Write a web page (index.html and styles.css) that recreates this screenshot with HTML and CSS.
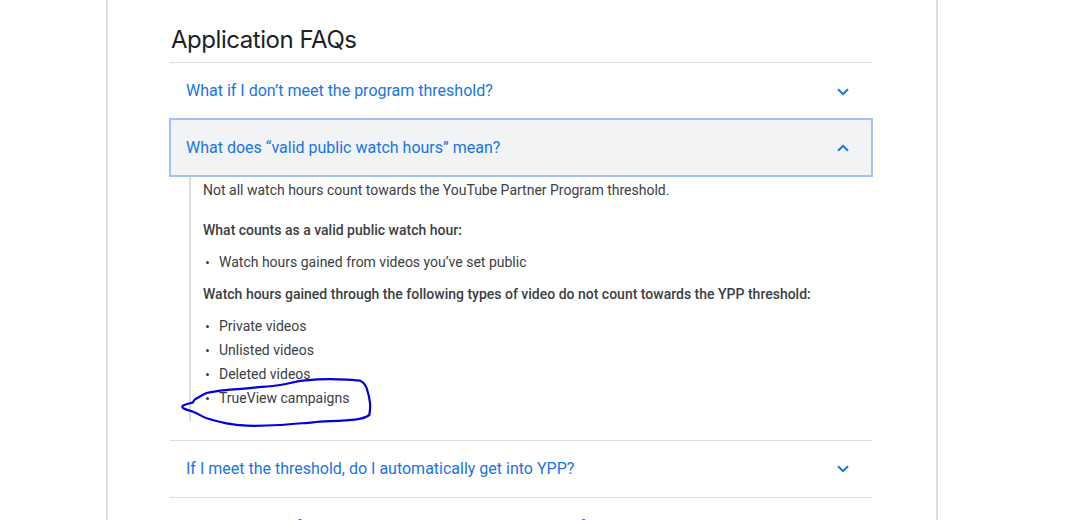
FILE: index.html
```html
<!DOCTYPE html>
<html lang="en">
<head>
<meta charset="utf-8">
<title>Application FAQs</title>
<link rel="stylesheet" href="styles.css">
</head>
<body>
<main class="card">
  <h2 class="title">Application FAQs</h2>
  <div class="faq">
    <div class="q first">
      <span>What if I don’t meet the program threshold?</span>
      <svg class="chev" viewBox="0 0 12 8" width="12" height="8"><path d="M1 2.2 6 7.2 11 2.2" /></svg>
    </div>
    <div class="q open">
      <span>What does “valid public watch hours” mean?</span>
      <svg class="chev" viewBox="0 0 12 8" width="12" height="8"><path d="M1 6.8 6 1.8 11 6.8" /></svg>
    </div>
    <div class="answer">
      <p class="lead">Not all watch hours count towards the YouTube Partner Program threshold.</p>
      <p class="strong">What counts as a valid public watch hour:</p>
      <ul class="list">
        <li>Watch hours gained from videos you’ve set public</li>
      </ul>
      <p class="strong second">Watch hours gained through the following types of video do not count towards the YPP threshold:</p>
      <ul class="list">
        <li>Private videos</li>
        <li>Unlisted videos</li>
        <li>Deleted videos</li>
        <li>TrueView campaigns</li>
      </ul>
      <svg class="scribble" viewBox="0 0 195 50" width="195" height="50"><path d="M12.7 24.7C13.5 23 14 22 15 21.3C19 19 23 16.5 26.7 15C31 13.8 35 13.4 40 12.7C52 11.5 65 10.8 76.7 9.3C85 8.6 92 8.2 100 7C108 5.8 115 3.6 123 2.7C134 1.6 146 1 156.7 1.3C165 1.5 174 1.6 180 2.7C183.5 4 185.5 7 186.7 10.3C188.3 15 189.5 20 190 25C190.4 29 190 33 189.3 37C186 39.5 181 40.8 176.7 41.3C162 42.8 147 43.2 133 44.3C122 45.2 111 46.4 100 47C89 47.6 78 48 66.7 47.7C60 47.4 53 46.6 46.7 45.3C39.5 43.8 33 42.5 26.7 40.3C22 38.5 18 35.6 13 33.7C9.5 32.5 6 31.8 3.3 30.3C2.4 29.6 2.2 28.6 2.7 27.7C5.5 26.4 8.7 25.6 11.7 24.7" /></svg>
    </div>
    <div class="q rule">
      <span>If I meet the threshold, do I automatically get into YPP?</span>
      <svg class="chev" viewBox="0 0 12 8" width="12" height="8"><path d="M1 1.2 6 6.2 11 1.2" /></svg>
    </div>
    <div class="q">
      <span>What happens if my channel drops below the threshold for a time?</span>
    </div>
  </div>
</main>
</body>
</html>
```
FILE: styles.css
```css
html, body {
  margin: 0;
  height: 520px;
  overflow: hidden;
  background: #fff;
}
.card {
  margin-left: 106px;
  width: 702px;
  height: 520px;
  padding: 0 64px 0 62px;
  border-left: 2px solid #dadce0;
  border-right: 2px solid #dadce0;
  font-family: Roboto, sans-serif;
  overflow: hidden;
}
.title {
  margin: 0;
  padding: 25px 0 0 1px;
  height: 37px;
  font: 400 24px/30px Inter, sans-serif;
  letter-spacing: -0.45px;
  color: #202124;
}
.faq {
  border-top: 1px solid #dadce0;
}
.q {
  box-sizing: border-box;
  height: 56px;
  padding: 0 23px 0 16px;
  display: flex;
  align-items: center;
  justify-content: space-between;
  font-size: 16px;
  color: #1a73e8;
}
.q.first {
  height: 55px;
}
.q.open {
  height: 59px;
  margin: 0 -1px 0 -1px;
  background: #f1f3f4;
  border: 2px solid #a1c2fa;
  padding: 0 22px 0 15px;
}
.q.rule {
  height: 58px;
  padding-bottom: 2px;
  border-top: 1px solid #dadce0;
  border-bottom: 1px solid #dadce0;
}
.chev {
  overflow: visible;
}
.q.rule .chev {
  position: relative;
  top: 1px;
}
.chev path {
  fill: none;
  stroke: #1a73e8;
  stroke-width: 2;
}
.answer {
  position: relative;
  box-sizing: border-box;
  margin: 0 0 19px 19px;
  padding: 1px 0 0 12px;
  height: 244px;
  border-left: 2px solid #dadce0;
  font-size: 14px;
  line-height: 24px;
  color: #3c4043;
}
.answer p {
  margin: 0;
}
.answer .lead {
  margin-bottom: 16px;
}
.strong {
  font-weight: 500;
}
.answer .second {
  margin-top: 8px;
}
.list {
  list-style: none;
  margin: 8px 0 0;
  padding: 0;
}
.list li {
  position: relative;
  padding-left: 16px;
}
.list li::before {
  content: "";
  position: absolute;
  left: 3px;
  top: 11px;
  width: 3px;
  height: 3px;
  border-radius: 50%;
  background: #3c4043;
}
.scribble {
  position: absolute;
  left: -11px;
  top: 201px;
  overflow: visible;
}
.scribble path {
  fill: none;
  stroke: #0000e0;
  stroke-width: 2.2;
  stroke-linecap: round;
  stroke-linejoin: round;
}
```
